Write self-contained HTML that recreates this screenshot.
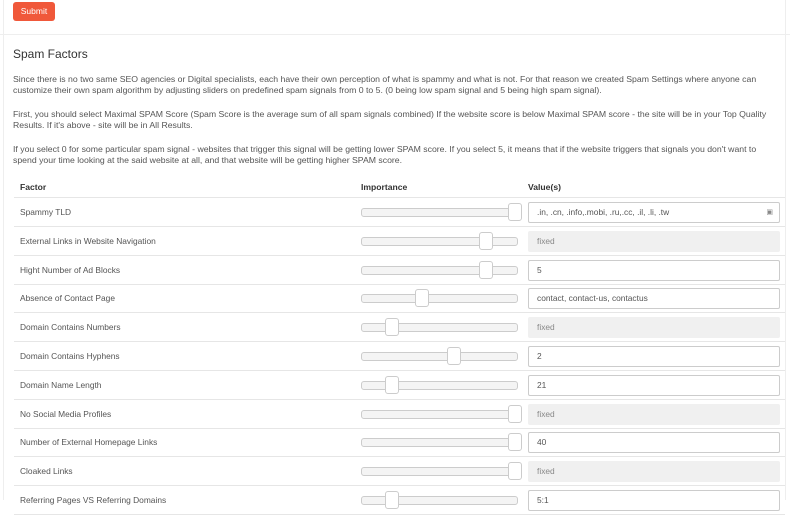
<!DOCTYPE html>
<html><head><meta charset="utf-8"><style>
*{box-sizing:border-box;margin:0;padding:0}
body{width:800px;height:500px;overflow:hidden;background:#fff;font-family:"Liberation Sans",sans-serif;color:#444;position:relative}
.abs{position:absolute}
.btn{left:13px;top:2px;width:42px;height:19px;background:#f0583a;border-radius:3px;color:#fff;font-size:8.5px;line-height:19px;text-align:center}
.p{left:13px;font-size:8.7px;line-height:11px;color:#555;width:785px;white-space:nowrap}
.lbl{left:20px;font-size:8.4px;color:#555}
.line{left:14px;width:771px;height:1px;background:#e6e6e6}
.track{left:361px;width:157px;height:9px;border:1px solid #ccc;border-radius:3px;background:#f4f4f4}
.handle{width:14px;height:18px;border:1px solid #ccc;border-radius:3px;background:#fff}
.inp{left:528px;width:252px;height:21px;border:1px solid #ccc;border-radius:2px;font-size:8.4px;line-height:19px;padding-left:8px;color:#555;background:#fff}
.fx{background:#f0f0f0;border-color:#f0f0f0;color:#888}
</style></head><body>
<div class="abs" style="left:3px;top:0;width:1px;height:500px;background:#eee"></div>
<div class="abs" style="left:785px;top:0;width:1px;height:500px;background:#eee"></div>
<div class="abs btn">Submit</div>
<div class="abs" style="left:0;top:34px;width:790px;height:1px;background:#eee"></div>
<div class="abs" style="left:13px;top:47px;font-size:12px;color:#333">Spam Factors</div>
<div class="abs p" style="top:74px">Since there is no two same SEO agencies or Digital specialists, each have their own perception of what is spammy and what is not. For that reason we created Spam Settings where anyone can<br>customize their own spam algorithm by adjusting sliders on predefined spam signals from 0 to 5. (0 being low spam signal and 5 being high spam signal).</div>
<div class="abs p" style="top:109px">First, you should select Maximal SPAM Score (Spam Score is the average sum of all spam signals combined) If the website score is below Maximal SPAM score - the site will be in your Top Quality<br>Results. If it's above - site will be in All Results.</div>
<div class="abs p" style="top:144px">If you select 0 for some particular spam signal - websites that trigger this signal will be getting lower SPAM score. If you select 5, it means that if the website triggers that signals you don't want to<br>spend your time looking at the said website at all, and that website will be getting higher SPAM score.</div>
<div class="abs" style="left:20px;top:182px;font-size:8.6px;font-weight:bold;color:#333">Factor</div>
<div class="abs" style="left:361px;top:182px;font-size:8.6px;font-weight:bold;color:#333">Importance</div>
<div class="abs" style="left:528px;top:182px;font-size:8.6px;font-weight:bold;color:#333">Value(s)</div>
<div class="abs line" style="top:197px"></div>
<div id="rows"></div>
<script>
var R=[["Spammy TLD",515,".in, .cn, .info,.mobi, .ru,.cc, .il, .li, .tw",0],
["External Links in Website Navigation",486,"fixed",1],
["Hight Number of Ad Blocks",486,"5",0],
["Absence of Contact Page",422,"contact, contact-us, contactus",0],
["Domain Contains Numbers",392,"fixed",1],
["Domain Contains Hyphens",454,"2",0],
["Domain Name Length",392,"21",0],
["No Social Media Profiles",515,"fixed",1],
["Number of External Homepage Links",515,"40",0],
["Cloaked Links",515,"fixed",1],
["Referring Pages VS Referring Domains",392,"5:1",0]];
var h="";
R.forEach(function(r,i){var c=212+i*28.8;
h+='<div class="abs lbl" style="top:'+(c-5)+'px">'+r[0]+'</div>';
h+='<div class="abs track" style="top:'+(c-4)+'px"></div>';
h+='<div class="abs handle" style="left:'+(r[1]-7)+'px;top:'+(c-9)+'px"></div>';
h+='<div class="abs inp'+(r[3]?' fx':'')+'" style="top:'+(c-10)+'px">'+r[2]+(i==0?'<span style="position:absolute;right:6px;top:0;font-size:7px;color:#888">&#9635;</span>':'')+'</div>';
h+='<div class="abs line" style="top:'+(c+14)+'px"></div>';});
document.getElementById("rows").innerHTML=h;
</script>
</body></html>
